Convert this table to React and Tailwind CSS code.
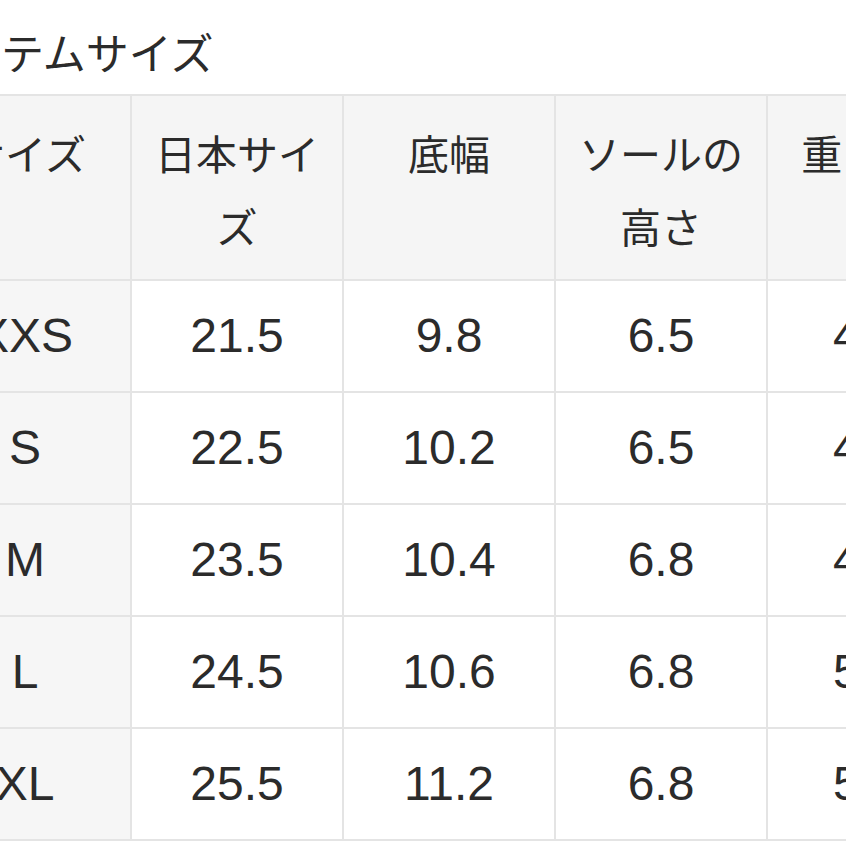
import React from "react";

const rows = [
  { size: "XXS", jp: "21.5", width: "9.8", sole: "6.5", weight: "420" },
  { size: "S", jp: "22.5", width: "10.2", sole: "6.5", weight: "440" },
  { size: "M", jp: "23.5", width: "10.4", sole: "6.8", weight: "460" },
  { size: "L", jp: "24.5", width: "10.6", sole: "6.8", weight: "500" },
  { size: "XL", jp: "25.5", width: "11.2", sole: "6.8", weight: "520" },
];

const headers = ["サイズ", "日本サイズ", "底幅", "ソールの高さ", "重さ (g)"];

export default function App() {
  return (
    <div
      className="w-[846px] h-[846px] overflow-hidden bg-white text-[#2b2b2b]"
      style={{ fontFamily: '"Liberation Sans", "Noto Sans CJK JP", sans-serif' }}
    >
      <div className="ml-[-82px] pt-[25px]">
        {/* Title */}
        <h2 className="h-[60px] leading-[60px] text-[43px] font-normal mb-[9px]">
          アイテムサイズ
        </h2>

        {/* Size table */}
        <table className="table-fixed border-collapse w-[1062px]">
          <colgroup>
            {headers.map((h) => (
              <col key={h} className="w-[212px]" />
            ))}
          </colgroup>
          <thead>
            <tr className="h-[185px]">
              {headers.map((h) => (
                <th
                  key={h}
                  className="align-top bg-[#f5f5f5] border-2 border-[#e4e4e4] px-[16px] pt-[24px] text-[41px] leading-[73px] font-normal text-center"
                >
                  {h}
                </th>
              ))}
            </tr>
          </thead>
          <tbody>
            {rows.map((r) => (
              <tr key={r.size} className="h-[112px]">
                <td className="bg-[#f6f6f6] border-2 border-[#e4e4e4] text-center text-[48px]">
                  {r.size}
                </td>
                <td className="border-2 border-[#e4e4e4] text-center text-[48px]">{r.jp}</td>
                <td className="border-2 border-[#e4e4e4] text-center text-[48px]">{r.width}</td>
                <td className="border-2 border-[#e4e4e4] text-center text-[48px]">{r.sole}</td>
                <td className="border-2 border-[#e4e4e4] text-center text-[48px]">{r.weight}</td>
              </tr>
            ))}
          </tbody>
        </table>
      </div>
    </div>
  );
}
